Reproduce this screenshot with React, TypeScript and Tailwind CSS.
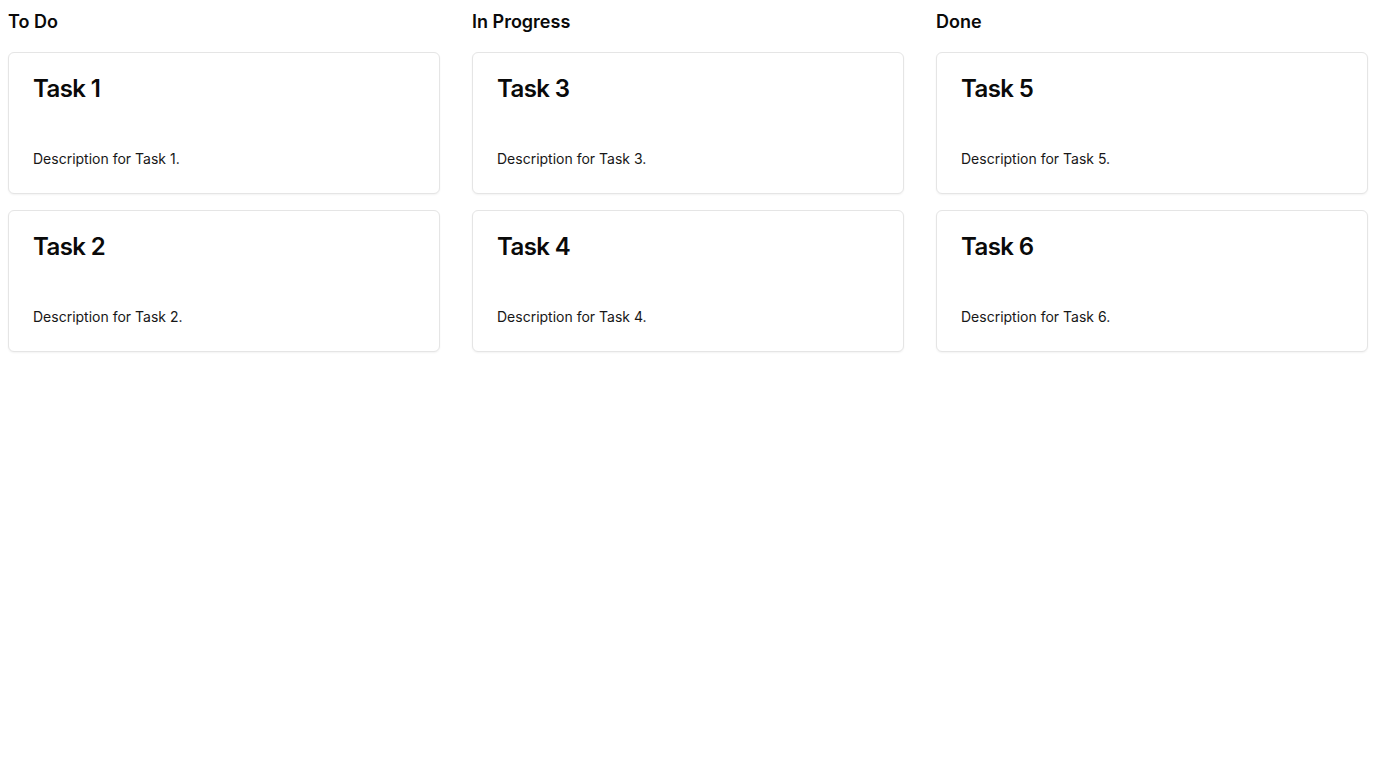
import React from "react";

const columns = [
  { title: "To Do", tasks: [1, 2] },
  { title: "In Progress", tasks: [3, 4] },
  { title: "Done", tasks: [5, 6] },
];

export default function App() {
  return (
    <div
      className="min-h-screen bg-white p-2 text-[#0a0a0a]"
      style={{ fontFamily: "Inter, 'Noto Sans', sans-serif" }}
    >
      <div className="grid grid-cols-3 gap-8">
        {columns.map((col) => (
          <div key={col.title} className="flex flex-col">
            <h2 className="mb-4 text-lg font-semibold leading-7">{col.title}</h2>
            <div className="flex flex-col gap-4">
              {col.tasks.map((n) => (
                <div
                  key={n}
                  className="rounded-md border border-[#e5e5e5] bg-white shadow-xs"
                >
                  <div className="p-6">
                    <h3 className="text-2xl font-semibold leading-6 tracking-tight">
                      Task {n}
                    </h3>
                  </div>
                  <div className="p-6">
                    <p className="text-sm leading-5 text-[#171717]">Description for Task {n}.</p>
                  </div>
                </div>
              ))}
            </div>
          </div>
        ))}
      </div>
    </div>
  );
}
